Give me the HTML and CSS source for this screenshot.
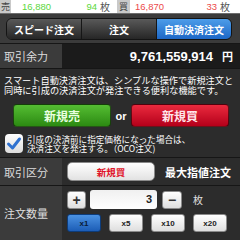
FILE: index.html
```html
<!DOCTYPE html>
<html lang="ja">
<head>
<meta charset="utf-8">
<link rel="stylesheet" href="styles.css">
</head>
<body>
<div class="quote">
  <div class="q-half q-left">
    <span class="q-tag">売</span>
    <div class="q-body"><span class="q-price up">16,880</span><span class="q-qty up">94</span><span class="q-unit">枚</span></div>
  </div>
  <div class="q-half q-right">
    <span class="q-tag">買</span>
    <div class="q-body"><span class="q-price down">16,870</span><span class="q-qty down">33</span><span class="q-unit">枚</span></div>
  </div>
</div>
<div class="tabbar">
  <div class="seg">
    <div class="seg-item">スピード注文</div>
    <div class="seg-item">注文</div>
    <div class="seg-item active">自動決済注文</div>
  </div>
</div>
<div class="row balance">
  <div class="label">取引余力</div>
  <div class="value">9,761,559,914<span class="yen">円</span></div>
</div>
<div class="desc">
  <p class="desc-text">スマート自動決済注文は、シンプルな操作で新規注文と<br>同時に引成の決済注文が発注できる便利な機能です。</p>
  <div class="actions">
    <button class="big sell">新規売</button>
    <span class="or">or</span>
    <button class="big buy">新規買</button>
  </div>
  <div class="oco">
    <span class="check"><svg width="18" height="19" viewBox="0 0 18 19"><path d="M3.5 10 L7.5 14 L14.5 5" fill="none" stroke="#2f72d0" stroke-width="3" stroke-linecap="round" stroke-linejoin="round"/></svg></span>
    <span class="oco-text">引成の決済前に指定価格になった場合は、<br>決済注文を発注する。（OCO注文)</span>
  </div>
</div>
<div class="row kind">
  <div class="label">取引区分</div>
  <div class="field">
    <button class="kind-btn">新規買</button>
    <span class="kind-text">最大指値注文</span>
  </div>
</div>
<div class="row qty">
  <div class="label">注文数量</div>
  <div class="field">
    <div class="stepper">
      <button class="sbtn">+</button>
      <div class="qty-input">3</div>
      <button class="sbtn minus">−</button>
      <span class="unit">枚</span>
    </div>
    <div class="mults">
      <button class="mbtn on">x1</button>
      <button class="mbtn">x5</button>
      <button class="mbtn">x10</button>
      <button class="mbtn">x20</button>
    </div>
  </div>
</div>
</body>
</html>
```
FILE: styles.css
```css
html, body {
  margin: 0;
  padding: 0;
}
body {
  width: 240px;
  height: 240px;
  overflow: hidden;
  background: #2c2c2c;
  font-family: "Noto Sans CJK JP", "Noto Sans", sans-serif;
}
button {
  font-family: inherit;
  padding: 0;
  margin: 0;
  cursor: pointer;
}

/* quote bar */
.quote {
  display: flex;
  height: 13px;
  background: #fff;
  border-bottom: 1px solid #6e6e6e;
}
.q-half {
  display: flex;
}
.q-left {
  width: 117px;
}
.q-right {
  flex: 1;
}
.q-tag {
  width: 11px;
  background: #c9c9c9;
  color: #444;
  font-size: 9px;
  line-height: 13px;
  text-align: center;
  overflow: hidden;
}
.q-right .q-tag {
  width: 13px;
}
.q-body {
  flex: 1;
  display: flex;
  align-items: center;
  padding: 0 7px 0 11px;
  font-family: "Liberation Sans", sans-serif;
  font-size: 9.5px;
}
.q-right .q-body {
  padding: 0 10px 0 5px;
}
.q-price {
  flex: 1;
}
.up {
  color: #5cd83c;
}
.down {
  color: #ec4a4a;
}
.q-unit {
  font-family: "Noto Sans CJK JP", sans-serif;
  color: #555;
  font-size: 10px;
  margin-left: 3px;
}

/* segmented tabs */
.tabbar {
  background: #3b3b3b;
  padding: 4px 8px 3px 6px;
}
.seg {
  display: flex;
  height: 22px;
  box-sizing: border-box;
  border: 1px solid #141414;
  border-radius: 6px;
  overflow: hidden;
}
.seg-item {
  flex: 1;
  display: flex;
  align-items: center;
  justify-content: center;
  color: #fff;
  font-weight: bold;
  font-size: 10px;
  background: linear-gradient(#595959, #262626);
  border-left: 1px solid #161616;
}
.seg-item:first-child {
  border-left: none;
}
.seg-item.active {
  background: linear-gradient(#4d9de9, #1d67c6);
}

/* rows */
.row {
  display: flex;
  border-top: 1px solid #161616;
}
.label {
  width: 62px;
  flex: none;
  box-sizing: border-box;
  background: #3b3b3b;
  color: #dcdcdc;
  font-size: 11px;
  padding-left: 4px;
  display: flex;
  align-items: center;
}
.balance {
  height: 24px;
}
.balance .value {
  flex: 1;
  background: #1b1b1b;
  display: flex;
  align-items: center;
  justify-content: flex-end;
  padding-right: 7px;
  color: #fff;
  font-family: "Liberation Sans", sans-serif;
  font-weight: bold;
  font-size: 13px;
}
.yen {
  font-family: "Noto Sans CJK JP", sans-serif;
  font-size: 11px;
  margin-left: 9px;
}

/* description block */
.desc {
  border-top: 1px solid #161616;
  padding: 7px 0 4px;
}
.desc-text {
  margin: 0;
  padding-left: 4px;
  font-size: 9.2px;
  line-height: 9.5px;
  color: #fff;
  white-space: nowrap;
}
.actions {
  display: flex;
  align-items: center;
  margin-top: 9px;
  padding: 0 11px 0 13px;
}
.big {
  flex: 1;
  height: 23px;
  border-radius: 4px;
  border: 1px solid rgba(0, 0, 0, 0.55);
  font-weight: bold;
  font-size: 12px;
  color: #fff;
}
.sell {
  background: linear-gradient(#55bd33, #2c8a12);
  color: #eaffe0;
}
.buy {
  background: linear-gradient(#ea2a3e, #b4001a);
  color: #ffe6ea;
}
.or {
  width: 20px;
  text-align: center;
  font-family: "Liberation Sans", sans-serif;
  font-weight: bold;
  font-size: 11px;
  color: #fff;
}
.oco {
  display: flex;
  align-items: center;
  margin-top: 7px;
  padding-left: 5px;
}
.check {
  width: 18px;
  height: 19px;
  flex: none;
  border-radius: 4px;
  background: linear-gradient(#ffffff, #dcdcdc);
}
.check svg {
  display: block;
}
.oco-text {
  margin-left: 4px;
  font-size: 8.6px;
  line-height: 9px;
  color: #fff;
  white-space: nowrap;
}

/* form fields */
.field {
  flex: 1;
  background: #2c2c2c;
  padding-left: 5px;
  display: flex;
  align-items: center;
}
.kind {
  height: 27px;
}
.kind-btn {
  width: 88px;
  height: 19px;
  border-radius: 5px;
  border: 1px solid #8a8a8a;
  background: linear-gradient(#ffffff, #e2e2e2);
  color: #e0142a;
  font-weight: bold;
  font-size: 9.5px;
}
.kind-text {
  margin-left: 10px;
  color: #fff;
  font-weight: bold;
  font-size: 11px;
}
.qty {
  height: 54px;
}
.qty .field {
  flex-direction: column;
  align-items: flex-start;
  justify-content: flex-start;
  padding-top: 4px;
}
.stepper {
  display: flex;
  align-items: center;
  height: 19px;
}
.sbtn {
  width: 19px;
  height: 18px;
  border-radius: 3px;
  border: 1px solid #8a8a8a;
  background: linear-gradient(#ffffff, #dedede);
  color: #333;
  font-family: "Liberation Sans", sans-serif;
  font-weight: bold;
  font-size: 14px;
  line-height: 14px;
}
.minus {
  width: 20px;
  margin-left: 5px;
}
.qty-input {
  width: 67px;
  height: 19px;
  margin-left: 4px;
  box-sizing: border-box;
  border-radius: 3px;
  background: linear-gradient(#f0f0f0, #ffffff);
  text-align: right;
  padding-right: 5px;
  font-family: "Liberation Sans", sans-serif;
  font-weight: bold;
  font-size: 11px;
  line-height: 19px;
  color: #222;
}
.unit {
  margin-left: 11px;
  color: #e0e0e0;
  font-size: 10px;
}
.mults {
  display: flex;
  gap: 8px;
  margin-top: 5px;
}
.mbtn {
  width: 34px;
  height: 18px;
  border-radius: 3px;
  border: 1px solid #8a8a8a;
  background: linear-gradient(#ffffff, #dedede);
  color: #222;
  font-family: "Liberation Sans", sans-serif;
  font-weight: bold;
  font-size: 8px;
}
.mbtn.on {
  border-color: #0d3c7a;
  background: linear-gradient(#4b92e2, #1c5db6);
  color: #0a1c38;
}
```
